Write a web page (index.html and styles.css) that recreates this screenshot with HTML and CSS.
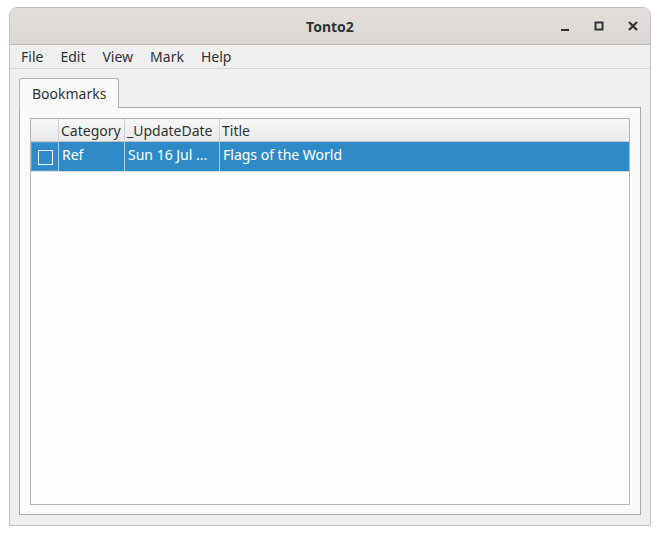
FILE: index.html
```html
<!DOCTYPE html>
<html lang="en">
<head>
    <meta charset="UTF-8">
    <title>Tonto2</title>
    <link rel="stylesheet" href="styles.css">
</head>
<body>
    <div class="window">
        <div class="titlebar">
            <span class="title">Tonto2</span>
            <div class="controls">
                <svg class="ctl" width="14" height="14" viewBox="0 0 14 14">
                    <rect x="3" y="10" width="8" height="2" fill="#2e3436"/>
                </svg>
                <svg class="ctl" width="14" height="14" viewBox="0 0 14 14">
                    <rect x="3.5" y="3.5" width="7" height="7" fill="none" stroke="#2e3436" stroke-width="2"/>
                </svg>
                <svg class="ctl" width="14" height="14" viewBox="0 0 14 14">
                    <path d="M3 3 L11 11 M11 3 L3 11" stroke="#2e3436" stroke-width="2.2"/>
                </svg>
            </div>
        </div>
        <div class="menubar">
            <span class="menu-item">File</span>
            <span class="menu-item">Edit</span>
            <span class="menu-item">View</span>
            <span class="menu-item">Mark</span>
            <span class="menu-item">Help</span>
        </div>
        <div class="content">
            <div class="tabs">
                <div class="tab">Bookmarks</div>
            </div>
            <div class="panel">
                <div class="table">
                    <div class="header">
                        <div class="hcell corner"></div>
                        <div class="hcell">Category</div>
                        <div class="hcell">_UpdateDate</div>
                        <div class="hcell last">Title</div>
                    </div>
                    <div class="row selected">
                        <div class="cell check"><span class="box"></span></div>
                        <div class="cell">Ref</div>
                        <div class="cell">Sun 16 Jul ...</div>
                        <div class="cell last">Flags of the World</div>
                    </div>
                </div>
            </div>
        </div>
    </div>
</body>
</html>
```

FILE: styles.css
```css
* {
    box-sizing: border-box;
}
body {
    margin: 0;
    background-color: #ffffff;
    font-family: "Noto Sans", "DejaVu Sans", sans-serif;
    font-size: 14px;
    color: #2e3436;
}
.window {
    margin: 7px 0 0 9px;
    width: 642px;
    height: 519px;
    border: 1px solid #c2c2c2;
    border-radius: 8px 8px 0 0;
    background-color: #efefef;
    display: flex;
    flex-direction: column;
    overflow: hidden;
}
.titlebar {
    height: 37px;
    flex-shrink: 0;
    background: linear-gradient(#e2dfdb, #dcd8d3);
    border-bottom: 1px solid #bdb9b4;
    position: relative;
    display: flex;
    align-items: center;
    justify-content: center;
}
.title {
    font-weight: bold;
    font-size: 14px;
    color: #2e3436;
}
.controls {
    position: absolute;
    right: 10px;
    top: 11px;
    display: flex;
    gap: 20px;
}
.ctl {
    display: block;
}
.menubar {
    height: 24px;
    flex-shrink: 0;
    border-bottom: 1px solid #d6d6d6;
    display: flex;
    align-items: center;
    padding-left: 11px;
}
.menu-item {
    margin-right: 17px;
    color: #2e3436;
}
.content {
    flex: 1;
    padding: 9px 9px 10px 9px;
    display: flex;
    flex-direction: column;
}
.tabs {
    display: flex;
    height: 29px;
    flex-shrink: 0;
}
.tab {
    width: 100px;
    background-color: #fafafa;
    border: 1px solid #b4b4b4;
    border-bottom: none;
    border-radius: 3px 3px 0 0;
    padding: 5px 0 0 12px;
    margin-bottom: -1px;
    position: relative;
    z-index: 1;
    height: 30px;
}
.panel {
    flex: 1;
    background-color: #fafafa;
    border: 1px solid #aaaaaa;
    padding: 10px 10px 9px 10px;
    display: flex;
}
.table {
    flex: 1;
    background-color: #fefefe;
    border: 1px solid #b4b4b4;
}
.header, .row {
    display: grid;
    grid-template-columns: 28px 66px 95px 1fr;
}
.header {
    height: 23px;
    background: linear-gradient(#f6f6f6, #eaeaea);
    border-bottom: 1px solid #c4c4c4;
}
.hcell {
    border-right: 1px solid #cfcfcf;
    padding: 2px 0 0 2px;
    white-space: nowrap;
}
.hcell.last {
    border-right: none;
}
.row {
    height: 30px;
    border-bottom: 1px solid #dcdcdc;
}
.row.selected {
    background-color: #2f8bc8;
    color: #ffffff;
}
.cell {
    border-right: 1px solid #a9cfea;
    padding: 3px 0 0 3px;
    white-space: nowrap;
}
.cell.last {
    border-right: none;
}
.cell.check {
    border: 1px solid #5aa3d6;
    border-right-color: #a9cfea;
    padding: 0;
    display: flex;
    align-items: center;
    justify-content: center;
}
.box {
    width: 15px;
    height: 15px;
    border: 1px solid #ffffff;
    margin-top: 2px;
}
```
